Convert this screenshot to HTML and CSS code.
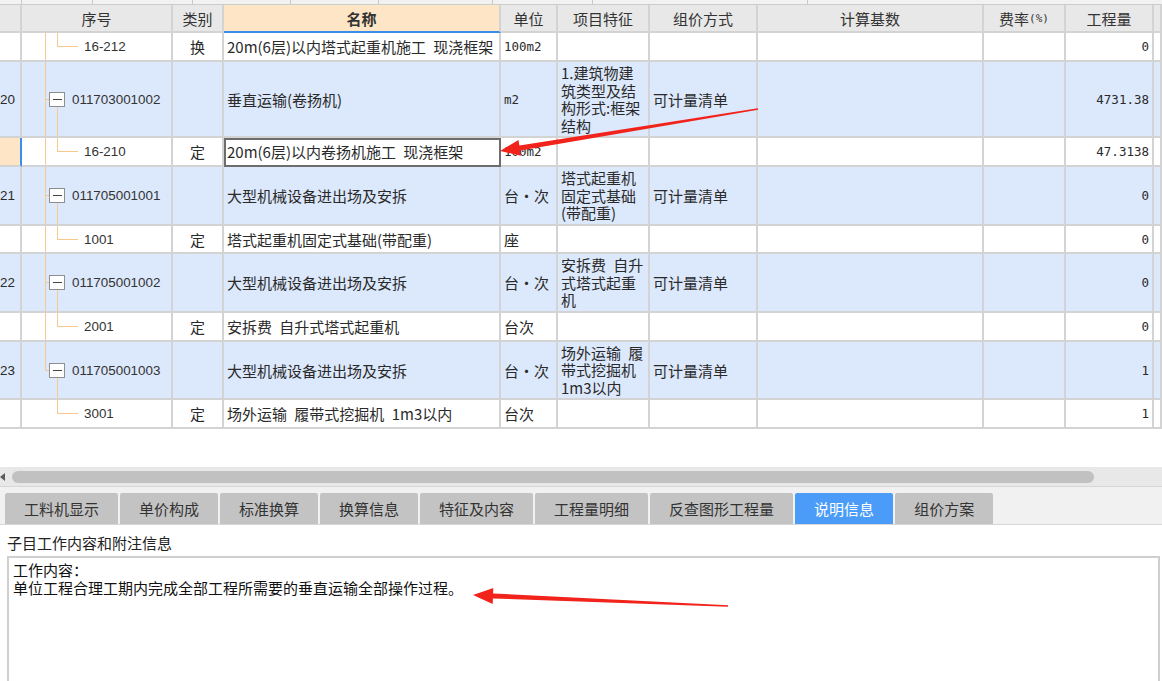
FILE: index.html
```html
<!DOCTYPE html>
<html lang="zh-CN">
<head>
<meta charset="utf-8">
<title>说明信息</title>
<link rel="stylesheet" href="styles.css">
</head>
<body>
<div class="app">
  <div class="strip">
    <span class="tk w21"></span><span class="tk w71"></span><span class="tk w100"></span><span class="tk w98"></span><span class="tk w88"></span><span class="tk w114"></span><span class="tk w100"></span><span class="tk w215"></span>
  </div>
  <div class="grid">
    <div class="row head">
      <div></div><div>序号</div><div>类别</div><div class="name">名称</div><div>单位</div><div>项目特征</div><div>组价方式</div><div>计算基数</div><div>费率<span class="pct">(%)</span></div><div>工程量</div><div></div>
    </div>
    <div class="row leaf">
      <div class="num"></div><div class="tree">16-212</div><div class="type">换</div><div class="nm">20m(6层)以内塔式起重机施工 现浇框架</div><div class="unit mono">100m2</div><div></div><div></div><div></div><div></div><div class="qty mono">0</div><div></div>
    </div>
    <div class="row par tall">
      <div class="num">20</div><div class="tree"><span class="box"></span>011703001002</div><div class="type"></div><div class="nm">垂直运输(卷扬机)</div><div class="unit mono">m2</div><div class="feat"><span>1.建筑物建</span><span>筑类型及结</span><span>构形式:框架</span><span>结构</span></div><div class="price">可计量清单</div><div></div><div></div><div class="qty mono">4731.38</div><div></div>
    </div>
    <div class="row leaf">
      <div class="num sel-num"></div><div class="tree">16-210</div><div class="type">定</div><div class="nm sel-name">20m(6层)以内卷扬机施工 现浇框架</div><div class="unit mono">100m2</div><div></div><div></div><div></div><div></div><div class="qty mono">47.3138</div><div></div>
    </div>
    <div class="row par">
      <div class="num">21</div><div class="tree"><span class="box"></span>011705001001</div><div class="type"></div><div class="nm">大型机械设备进出场及安拆</div><div class="unit">台・次</div><div class="feat"><span>塔式起重机</span><span>固定式基础</span><span>(带配重)</span></div><div class="price">可计量清单</div><div></div><div></div><div class="qty mono">0</div><div></div>
    </div>
    <div class="row leaf h28">
      <div class="num"></div><div class="tree">1001</div><div class="type">定</div><div class="nm">塔式起重机固定式基础(带配重)</div><div class="unit">座</div><div></div><div></div><div></div><div></div><div class="qty mono">0</div><div></div>
    </div>
    <div class="row par">
      <div class="num">22</div><div class="tree"><span class="box"></span>011705001002</div><div class="type"></div><div class="nm">大型机械设备进出场及安拆</div><div class="unit">台・次</div><div class="feat"><span>安拆费 自升</span><span>式塔式起重</span><span>机</span></div><div class="price">可计量清单</div><div></div><div></div><div class="qty mono">0</div><div></div>
    </div>
    <div class="row leaf">
      <div class="num"></div><div class="tree">2001</div><div class="type">定</div><div class="nm">安拆费 自升式塔式起重机</div><div class="unit">台次</div><div></div><div></div><div></div><div></div><div class="qty mono">0</div><div></div>
    </div>
    <div class="row par last h58">
      <div class="num">23</div><div class="tree"><span class="box"></span>011705001003</div><div class="type"></div><div class="nm">大型机械设备进出场及安拆</div><div class="unit">台・次</div><div class="feat"><span>场外运输 履</span><span>带式挖掘机</span><span>1m3以内</span></div><div class="price">可计量清单</div><div></div><div></div><div class="qty mono">1</div><div></div>
    </div>
    <div class="row leaf end">
      <div class="num"></div><div class="tree">3001</div><div class="type">定</div><div class="nm">场外运输 履带式挖掘机 1m3以内</div><div class="unit">台次</div><div></div><div></div><div></div><div></div><div class="qty mono">1</div><div></div>
    </div>
  </div>
  <div class="blank"></div>
  <div class="hscroll"><span class="larr"></span><span class="thumb"></span></div>
  <div class="tabbar">
    <div class="tab">工料机显示</div>
    <div class="tab">单价构成</div>
    <div class="tab">标准换算</div>
    <div class="tab">换算信息</div>
    <div class="tab">特征及内容</div>
    <div class="tab">工程量明细</div>
    <div class="tab">反查图形工程量</div>
    <div class="tab on">说明信息</div>
    <div class="tab">组价方案</div>
  </div>
  <div class="label">子目工作内容和附注信息</div>
  <div class="memo"><span>工作内容：</span><span>单位工程合理工期内完成全部工程所需要的垂直运输全部操作过程。</span></div>
</div>
<svg class="annot" width="1162" height="681" viewBox="0 0 1162 681">
  <polygon points="500,151 518.5,140 519.4,145.4 757.9,108.3 758.1,109.7 520.2,150.4 521,155.8" fill="#f2231b"/>
  <polygon points="473,595 493.3,587.9 493.1,593.4 728,605.3 728,606.7 492.9,598.4 492.7,603.9" fill="#f2231b"/>
</svg>
</body>
</html>
```

FILE: styles.css
```css
* { box-sizing: border-box; margin: 0; padding: 0; }
html, body { width: 1162px; height: 681px; overflow: hidden; background: #fff; }
body {
  position: relative;
  font-family: "Noto Sans CJK SC", "Liberation Sans", sans-serif;
  font-size: 15px;
  color: #2a2a2a;
  word-spacing: 4px;
}
.app { display: flex; flex-direction: column; width: 1162px; height: 681px; }

.strip { height: 4px; flex: none; display: flex; background: #f2f2f2; }
.tk { border-right: 1px solid #c9c9c9; height: 4px; }
.w21 { width: 22px; } .w71 { width: 71px; } .w100 { width: 100px; } .w98 { width: 98px; }
.w88 { width: 88px; } .w114 { width: 114px; } .w215 { width: 215px; }

.grid { flex: none; }
.row {
  display: grid;
  grid-template-columns: 22px 151px 51px 277px 57px 92px 108px 226px 82px 88px 1fr;
}
.row > div {
  border-right: 2px solid #d3d3d3;
  border-bottom: 2px solid #d3d3d3;
  display: flex;
  align-items: center;
  overflow: hidden;
  white-space: nowrap;
}
.head { height: 29px; background: #e8e8e8; border-top: 1px solid #cdcdcd; }
.head > div { justify-content: center; color: #333; }
.head .name { background: #fde5c6; font-weight: bold; border-bottom-color: #3b8ded; }
.pct { font-family: "DejaVu Sans Mono", monospace; font-size: 11px; }

.leaf { height: 29px; background: #fff; }
.par { height: 59px; background: #dce8fb; }
.tall { height: 76px; }
.h28 { height: 28px; }
.h58 { height: 58px; }

.num {
  justify-content: flex-end;
  padding-right: 5px;
  font-family: "Liberation Sans", sans-serif;
  font-size: 13.4px;
}
.sel-num { background: #fde5c6; border-right-color: #3b8ded !important; }

.tree {
  font-family: "Liberation Sans", sans-serif;
  font-size: 13.4px;
  color: #333;
  background-repeat: no-repeat;
}
.leaf .tree {
  padding-left: 62px;
  background-image: linear-gradient(#f8c88c, #f8c88c), linear-gradient(#f8c88c, #f8c88c), linear-gradient(#f8c88c, #f8c88c);
  background-position: 23px 0, 35px 0, 35px 50%;
  background-size: 1px 100%, 1px 50%, 21px 1px;
}
.leaf.end .tree { background-size: 0 0, 1px 50%, 21px 1px; }
.par .tree {
  padding-left: 27px;
  background-image: linear-gradient(#f8c88c, #f8c88c), linear-gradient(#f8c88c, #f8c88c), linear-gradient(#f8c88c, #f8c88c);
  background-position: 23px 0, 23px 50%, 35px 100%;
  background-size: 1px 100%, 4px 1px, 1px 50%;
}
.par.last .tree { background-size: 1px 50%, 4px 1px, 1px 50%; }
.box {
  flex: none;
  width: 16px;
  height: 15px;
  margin-right: 7px;
  border: 1px solid #8e8e8e;
  background: #fff linear-gradient(#444, #444) center / 9px 1px no-repeat;
}

.type { justify-content: center; }
.nm { padding-left: 3px; }
.sel-name { outline: 2px solid #6d6d6d; outline-offset: -2px; }
.unit { padding-left: 3px; }
.mono { font-family: "DejaVu Sans Mono", monospace; font-size: 12.5px; word-spacing: 0; }
.row > .feat {
  padding-left: 3px;
  flex-direction: column;
  align-items: flex-start;
  justify-content: center;
}
.feat span { display: block; height: 17.5px; line-height: 17.5px; overflow: visible; }
.price { padding-left: 3px; }
.qty { justify-content: flex-end; padding-right: 3px; }

.blank { height: 38px; flex: none; }
.hscroll { height: 19px; flex: none; background: #e8e8e8; display: flex; align-items: center; }
.larr {
  width: 0; height: 0;
  border-right: 5px solid #5c5c5c;
  border-top: 4px solid transparent;
  border-bottom: 4px solid transparent;
}
.thumb { margin-left: 7px; width: 1082px; height: 12px; border-radius: 6px; background: #c1c1c1; }

.tabbar {
  height: 39px;
  flex: none;
  background: #f1f1f1;
  border-top: 1px solid #d6d6d6;
  border-bottom: 1px solid #d8d8d8;
  display: flex;
  align-items: flex-end;
  gap: 2px;
  padding-left: 5px;
}
.tab {
  height: 31px;
  line-height: 31px;
  padding: 0 19px;
  background: #c3c3c3;
  color: #333;
  border-radius: 2px 2px 0 0;
}
.tab.on { background: #4a9cf8; color: #fff; }

.label { height: 31px; flex: none; display: flex; align-items: center; padding: 3px 0 0 7px; color: #222; }
.memo {
  flex: none;
  height: 140px;
  margin: 0 2px 0 7px;
  border: 2px solid #cfcfcf;
  padding: 3px 0 0 4px;
  color: #111;
}
.memo span { display: block; height: 18px; line-height: 18px; }

.annot { position: absolute; left: 0; top: 0; pointer-events: none; }
```
